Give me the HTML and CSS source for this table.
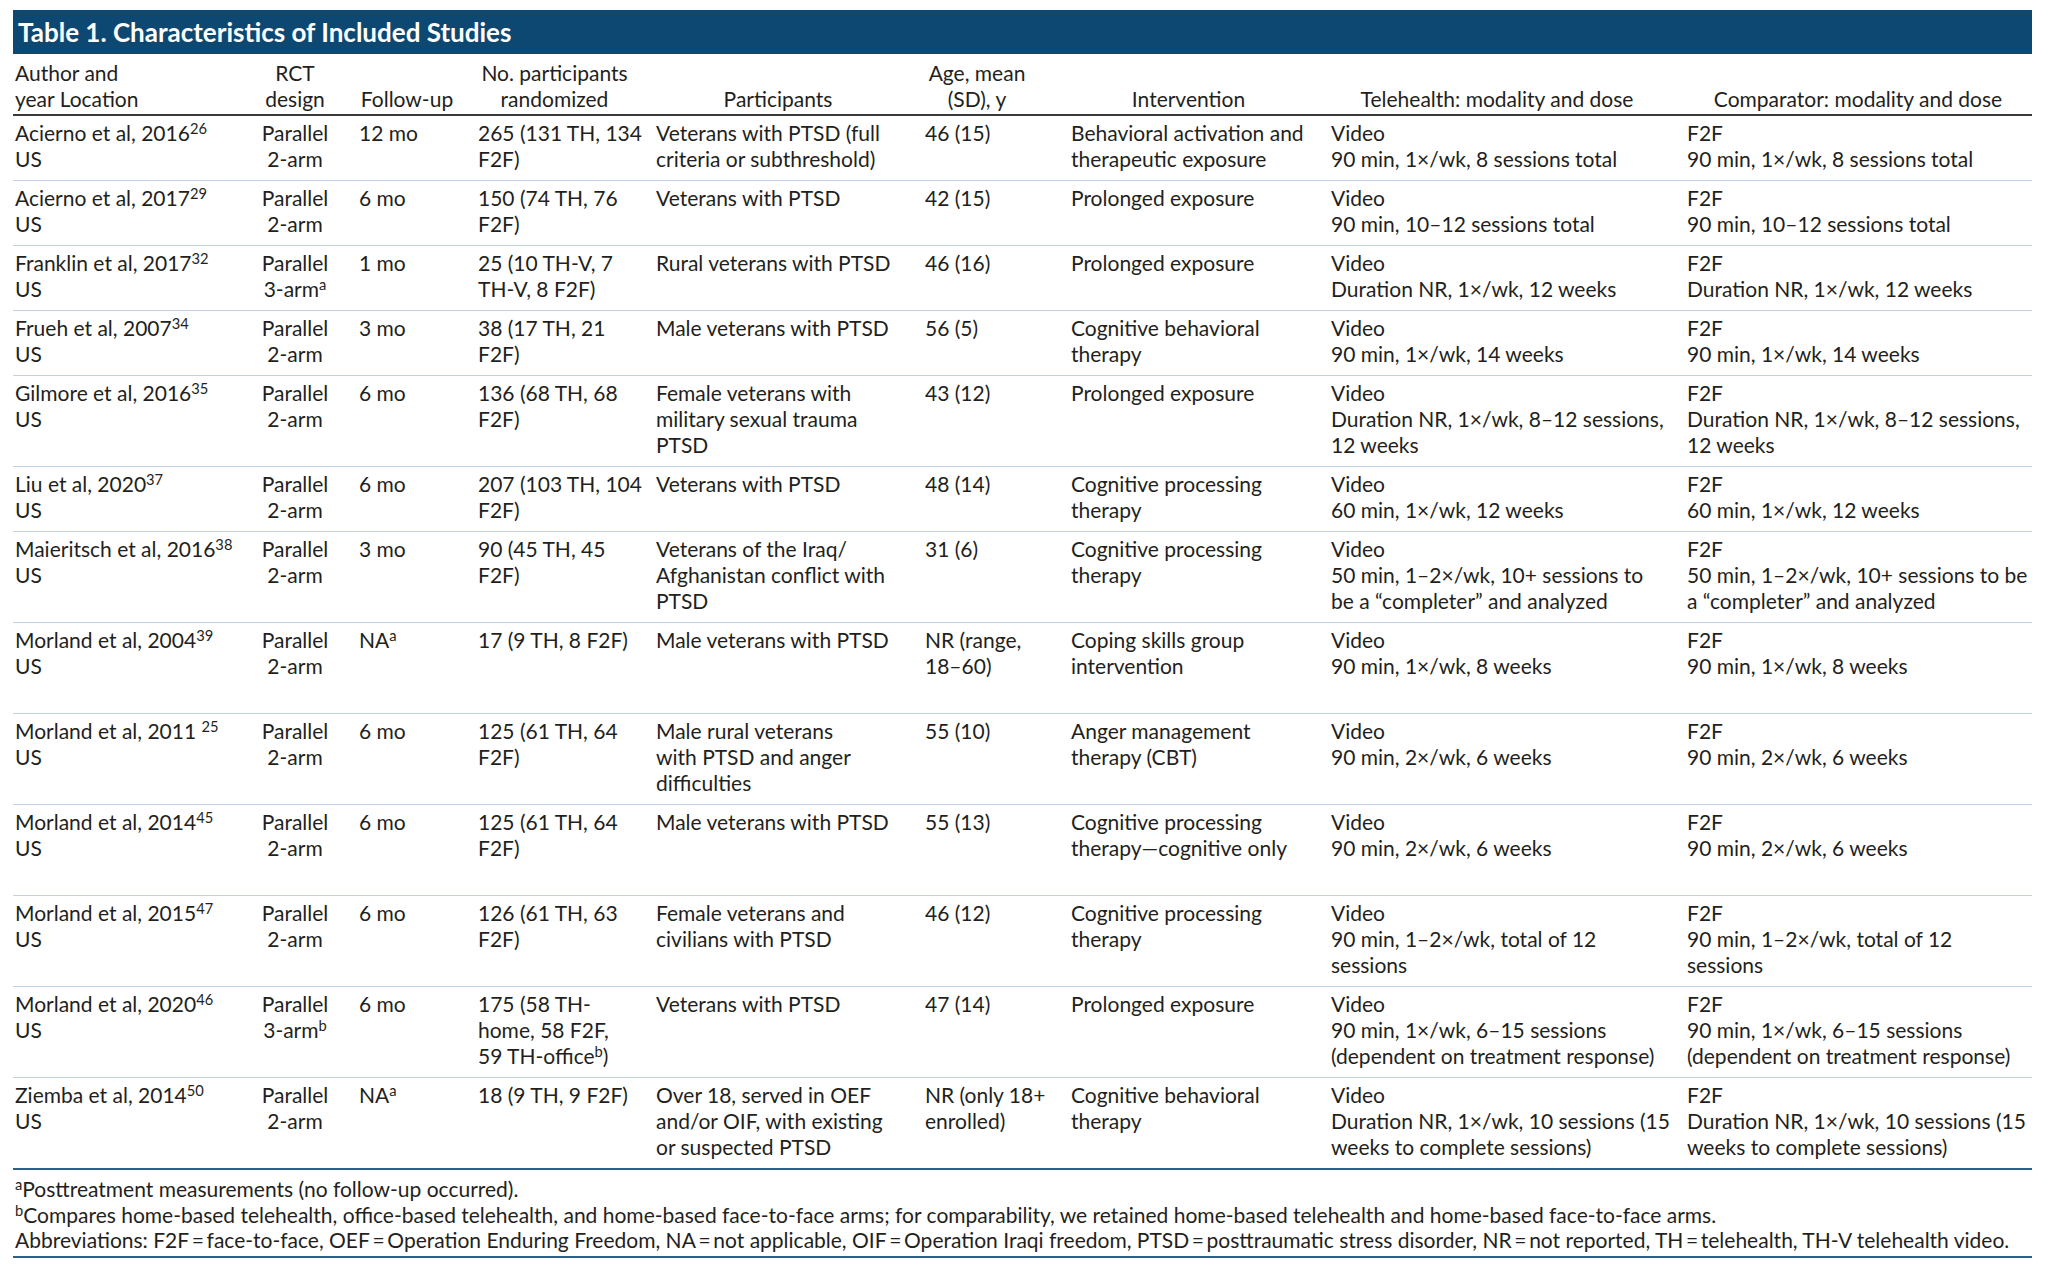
FILE: index.html
```html
<!DOCTYPE html>
<html lang="en">
<head>
<meta charset="utf-8">
<title>Table 1. Characteristics of Included Studies</title>
<link rel="stylesheet" href="styles.css">
</head>
<body>
<div class="page">
  <div class="title">Table 1. Characteristics of Included Studies</div>
  <table class="studies">
    <colgroup>
      <col class="c-author"><col class="c-rct"><col class="c-follow"><col class="c-num"><col class="c-part"><col class="c-age"><col class="c-int"><col class="c-tele"><col class="c-comp">
    </colgroup>
    <thead>
      <tr>
        <th class="author">Author and<br>year Location</th>
        <th class="rct">RCT<br>design</th>
        <th class="follow">Follow-up</th>
        <th>No. participants<br>randomized</th>
        <th>Participants</th>
        <th class="age">Age, mean<br>(SD), y</th>
        <th>Intervention</th>
        <th class="tele">Telehealth: modality and dose</th>
        <th class="comp">Comparator: modality and dose</th>
      </tr>
    </thead>
    <tbody>
      <tr>
        <td class="author">Acierno et al, 2016<sup>26</sup><br>US</td>
        <td class="rct">Parallel<br>2-arm</td>
        <td class="follow">12 mo</td>
        <td>265 (131 TH, 134<br>F2F)</td>
        <td>Veterans with PTSD (full<br>criteria or subthreshold)</td>
        <td class="age">46 (15)</td>
        <td>Behavioral activation and<br>therapeutic exposure</td>
        <td class="tele">Video<br>90 min, 1×/wk, 8 sessions total</td>
        <td class="comp">F2F<br>90 min, 1×/wk, 8 sessions total</td>
      </tr>
      <tr>
        <td class="author">Acierno et al, 2017<sup>29</sup><br>US</td>
        <td class="rct">Parallel<br>2-arm</td>
        <td class="follow">6 mo</td>
        <td>150 (74 TH, 76<br>F2F)</td>
        <td>Veterans with PTSD</td>
        <td class="age">42 (15)</td>
        <td>Prolonged exposure</td>
        <td class="tele">Video<br>90 min, 10–12 sessions total</td>
        <td class="comp">F2F<br>90 min, 10–12 sessions total</td>
      </tr>
      <tr>
        <td class="author">Franklin et al, 2017<sup>32</sup><br>US</td>
        <td class="rct">Parallel<br>3-arm<sup>a</sup></td>
        <td class="follow">1 mo</td>
        <td>25 (10 TH-V, 7<br>TH-V, 8 F2F)</td>
        <td>Rural veterans with PTSD</td>
        <td class="age">46 (16)</td>
        <td>Prolonged exposure</td>
        <td class="tele">Video<br>Duration NR, 1×/wk, 12 weeks</td>
        <td class="comp">F2F<br>Duration NR, 1×/wk, 12 weeks</td>
      </tr>
      <tr>
        <td class="author">Frueh et al, 2007<sup>34</sup><br>US</td>
        <td class="rct">Parallel<br>2-arm</td>
        <td class="follow">3 mo</td>
        <td>38 (17 TH, 21<br>F2F)</td>
        <td>Male veterans with PTSD</td>
        <td class="age">56 (5)</td>
        <td>Cognitive behavioral<br>therapy</td>
        <td class="tele">Video<br>90 min, 1×/wk, 14 weeks</td>
        <td class="comp">F2F<br>90 min, 1×/wk, 14 weeks</td>
      </tr>
      <tr>
        <td class="author">Gilmore et al, 2016<sup>35</sup><br>US</td>
        <td class="rct">Parallel<br>2-arm</td>
        <td class="follow">6 mo</td>
        <td>136 (68 TH, 68<br>F2F)</td>
        <td>Female veterans with<br>military sexual trauma<br>PTSD</td>
        <td class="age">43 (12)</td>
        <td>Prolonged exposure</td>
        <td class="tele">Video<br>Duration NR, 1×/wk, 8–12 sessions,<br>12 weeks</td>
        <td class="comp">F2F<br>Duration NR, 1×/wk, 8–12 sessions,<br>12 weeks</td>
      </tr>
      <tr>
        <td class="author">Liu et al, 2020<sup>37</sup><br>US</td>
        <td class="rct">Parallel<br>2-arm</td>
        <td class="follow">6 mo</td>
        <td>207 (103 TH, 104<br>F2F)</td>
        <td>Veterans with PTSD</td>
        <td class="age">48 (14)</td>
        <td>Cognitive processing<br>therapy</td>
        <td class="tele">Video<br>60 min, 1×/wk, 12 weeks</td>
        <td class="comp">F2F<br>60 min, 1×/wk, 12 weeks</td>
      </tr>
      <tr>
        <td class="author">Maieritsch et al, 2016<sup>38</sup><br>US</td>
        <td class="rct">Parallel<br>2-arm</td>
        <td class="follow">3 mo</td>
        <td>90 (45 TH, 45<br>F2F)</td>
        <td>Veterans of the Iraq/<br>Afghanistan conflict with<br>PTSD</td>
        <td class="age">31 (6)</td>
        <td>Cognitive processing<br>therapy</td>
        <td class="tele">Video<br>50 min, 1–2×/wk, 10+ sessions to<br>be a “completer” and analyzed</td>
        <td class="comp">F2F<br>50 min, 1–2×/wk, 10+ sessions to be<br>a “completer” and analyzed</td>
      </tr>
      <tr class="tall">
        <td class="author">Morland et al, 2004<sup>39</sup><br>US</td>
        <td class="rct">Parallel<br>2-arm</td>
        <td class="follow">NA<sup>a</sup></td>
        <td>17 (9 TH, 8 F2F)</td>
        <td>Male veterans with PTSD</td>
        <td class="age">NR (range,<br>18–60)</td>
        <td>Coping skills group<br>intervention</td>
        <td class="tele">Video<br>90 min, 1×/wk, 8 weeks</td>
        <td class="comp">F2F<br>90 min, 1×/wk, 8 weeks</td>
      </tr>
      <tr>
        <td class="author">Morland et al, 2011 <sup>25</sup><br>US</td>
        <td class="rct">Parallel<br>2-arm</td>
        <td class="follow">6 mo</td>
        <td>125 (61 TH, 64<br>F2F)</td>
        <td>Male rural veterans<br>with PTSD and anger<br>difficulties</td>
        <td class="age">55 (10)</td>
        <td>Anger management<br>therapy (CBT)</td>
        <td class="tele">Video<br>90 min, 2×/wk, 6 weeks</td>
        <td class="comp">F2F<br>90 min, 2×/wk, 6 weeks</td>
      </tr>
      <tr class="tall">
        <td class="author">Morland et al, 2014<sup>45</sup><br>US</td>
        <td class="rct">Parallel<br>2-arm</td>
        <td class="follow">6 mo</td>
        <td>125 (61 TH, 64<br>F2F)</td>
        <td>Male veterans with PTSD</td>
        <td class="age">55 (13)</td>
        <td>Cognitive processing<br>therapy—cognitive only</td>
        <td class="tele">Video<br>90 min, 2×/wk, 6 weeks</td>
        <td class="comp">F2F<br>90 min, 2×/wk, 6 weeks</td>
      </tr>
      <tr>
        <td class="author">Morland et al, 2015<sup>47</sup><br>US</td>
        <td class="rct">Parallel<br>2-arm</td>
        <td class="follow">6 mo</td>
        <td>126 (61 TH, 63<br>F2F)</td>
        <td>Female veterans and<br>civilians with PTSD</td>
        <td class="age">46 (12)</td>
        <td>Cognitive processing<br>therapy</td>
        <td class="tele">Video<br>90 min, 1–2×/wk, total of 12<br>sessions</td>
        <td class="comp">F2F<br>90 min, 1–2×/wk, total of 12<br>sessions</td>
      </tr>
      <tr>
        <td class="author">Morland et al, 2020<sup>46</sup><br>US</td>
        <td class="rct">Parallel<br>3-arm<sup>b</sup></td>
        <td class="follow">6 mo</td>
        <td>175 (58 TH-<br>home, 58 F2F,<br>59 TH-office<sup>b</sup>)</td>
        <td>Veterans with PTSD</td>
        <td class="age">47 (14)</td>
        <td>Prolonged exposure</td>
        <td class="tele">Video<br>90 min, 1×/wk, 6–15 sessions<br>(dependent on treatment response)</td>
        <td class="comp">F2F<br>90 min, 1×/wk, 6–15 sessions<br>(dependent on treatment response)</td>
      </tr>
      <tr>
        <td class="author">Ziemba et al, 2014<sup>50</sup><br>US</td>
        <td class="rct">Parallel<br>2-arm</td>
        <td class="follow">NA<sup>a</sup></td>
        <td>18 (9 TH, 9 F2F)</td>
        <td>Over 18, served in OEF<br>and/or OIF, with existing<br>or suspected PTSD</td>
        <td class="age">NR (only 18+<br>enrolled)</td>
        <td>Cognitive behavioral<br>therapy</td>
        <td class="tele">Video<br>Duration NR, 1×/wk, 10 sessions (15<br>weeks to complete sessions)</td>
        <td class="comp">F2F<br>Duration NR, 1×/wk, 10 sessions (15<br>weeks to complete sessions)</td>
      </tr>
    </tbody>
  </table>
  <div class="notes">
    <p><sup>a</sup>Posttreatment measurements (no follow-up occurred).</p>
    <p><sup>b</sup>Compares home-based telehealth, office-based telehealth, and home-based face-to-face arms; for comparability, we retained home-based telehealth and home-based face-to-face arms.</p>
    <p>Abbreviations: F2F&#8201;=&#8201;face-to-face, OEF&#8201;=&#8201;Operation Enduring Freedom, NA&#8201;=&#8201;not applicable, OIF&#8201;=&#8201;Operation Iraqi freedom, PTSD&#8201;=&#8201;posttraumatic stress disorder, NR&#8201;=&#8201;not reported, TH&#8201;=&#8201;telehealth, TH-V telehealth video.</p>
  </div>
</div>
</body>
</html>
```
FILE: styles.css
```css
html, body {
  margin: 0;
  padding: 0;
  background: #ffffff;
}

body {
  font-family: Lato, "Liberation Sans", sans-serif;
  color: #231f20;
}

.page {
  width: 2019px;
  padding: 10px 16px 0 13px;
}

.title {
  height: 44px;
  background: #0d4872;
  color: #ffffff;
  font-weight: 700;
  font-size: 26px;
  line-height: 44px;
  padding-left: 5px;
  white-space: nowrap;
}

.studies {
  width: 2019px;
  table-layout: fixed;
  border-collapse: collapse;
  font-size: 21px;
  line-height: 26px;
}

.c-author { width: 237px; }
.c-rct { width: 95px; }
.c-follow { width: 120px; }
.c-num { width: 178px; }
.c-part { width: 269px; }
.c-age { width: 146px; }
.c-int { width: 260px; }
.c-tele { width: 356px; }
.c-comp { width: 358px; }

.studies th {
  font-weight: 400;
  text-align: center;
  vertical-align: bottom;
  white-space: nowrap;
  padding: 6px 12px 2px 13px;
  border-bottom: 2px solid #3a3a3a;
}

.studies td {
  text-align: left;
  vertical-align: top;
  white-space: nowrap;
  padding: 4px 12px 8px 13px;
  border-bottom: 1px solid #bed1e8;
}

.studies tbody tr:last-child td {
  border-bottom: 2px solid #2c5f8d;
}

.studies .author {
  text-align: left;
  padding-left: 2px;
  padding-right: 0;
}

.studies .rct {
  text-align: center;
  padding-left: 0;
  padding-right: 5px;
}

.studies .follow {
  padding-left: 14px;
  padding-right: 10px;
}

.studies .age {
  padding-right: 29px;
}

.studies .tele {
  padding-right: 11px;
}

.studies .comp {
  padding-right: 3px;
}

.studies tr.tall td {
  height: 78px;
}

sup {
  font-size: 70%;
  line-height: 0;
  vertical-align: 0.5em;
}

.notes {
  border-bottom: 2px solid #2c5f8d;
  padding: 6px 0 3px 2px;
  font-size: 21px;
  line-height: 25.5px;
  white-space: nowrap;
}

.notes p {
  margin: 0;
}
```
